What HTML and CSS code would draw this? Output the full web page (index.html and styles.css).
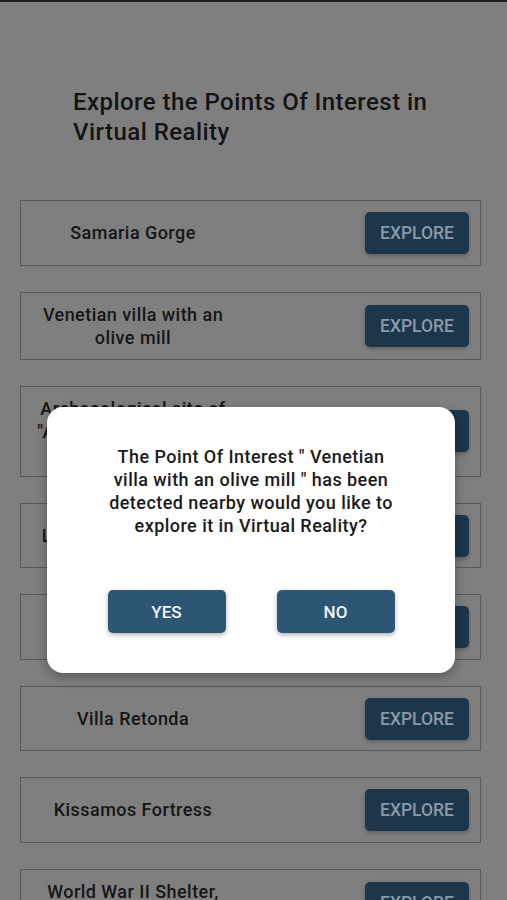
FILE: index.html
```html
<!DOCTYPE html>
<html lang="en">
<head>
<meta charset="utf-8">
<title>Explore the Points Of Interest</title>
<link rel="stylesheet" href="styles.css">
</head>
<body>
<div class="statusbar"></div>
<main class="page">
  <h1 class="title">Explore the Points Of Interest in Virtual Reality</h1>
  <ul class="list">
    <li class="card"><span class="name">Samaria Gorge</span><button class="explore">EXPLORE</button></li>
    <li class="card"><span class="name">Venetian villa with an olive mill</span><button class="explore">EXPLORE</button></li>
    <li class="card"><span class="name">Archaeological site of "Ancient Eleutherna" in Rethymno</span><button class="explore">EXPLORE</button></li>
    <li class="card"><span class="name">Lake Kournas, Chania</span><button class="explore">EXPLORE</button></li>
    <li class="card"><span class="name">Frangokastello</span><button class="explore">EXPLORE</button></li>
    <li class="card"><span class="name">Villa Retonda</span><button class="explore">EXPLORE</button></li>
    <li class="card"><span class="name">Kissamos Fortress</span><button class="explore">EXPLORE</button></li>
    <li class="card"><span class="name">World War II Shelter, Heraklion</span><button class="explore">EXPLORE</button></li>
  </ul>
</main>
<div class="dialog" role="dialog">
  <p class="dialog-text">The Point Of Interest " Venetian villa with an olive mill " has been detected nearby would you like to explore it in Virtual Reality?</p>
  <div class="dialog-actions">
    <button class="dbtn">YES</button>
    <button class="dbtn">NO</button>
  </div>
</div>
</body>
</html>
```

FILE: styles.css
```css
* { box-sizing: border-box; }
html, body {
  margin: 0;
  padding: 0;
  background: #7f7f7f;
  font-family: Roboto, "Noto Sans", "Liberation Sans", sans-serif;
  overflow: hidden;
}
.statusbar {
  height: 2px;
  background: #1c1c1c;
}
.page {
  padding: 85px 26px 0 20px;
}
.title {
  margin: 0 0 53px 53px;
  width: 400px;
  font-size: 24px;
  line-height: 30px;
  font-weight: 500;
  letter-spacing: 0.45px;
  color: #141414;
}
.list {
  list-style: none;
  margin: 0;
  padding: 0;
  display: flex;
  flex-direction: column;
  gap: 26px;
}
.card {
  display: flex;
  align-items: center;
  border: 1px solid #595959;
}
.name {
  width: 224px;
  padding: 10px 11px;
  text-align: center;
  font-size: 18px;
  line-height: 23px;
  font-weight: 500;
  letter-spacing: 0.45px;
  color: #161616;
}
.explore {
  margin: 11px 11px 10.5px auto;
  width: 104px;
  height: 42px;
  border: none;
  border-radius: 5px;
  background: #1c364b;
  color: #8a9aa8;
  font-family: inherit;
  font-size: 17.5px;
  font-weight: 500;
  box-shadow: 0 2px 4px rgba(0,0,0,0.25);
}
.dialog {
  position: absolute;
  left: 47px;
  top: 407px;
  width: 408px;
  height: 266px;
  background: #ffffff;
  border-radius: 16px;
  box-shadow: 0 4px 12px rgba(0,0,0,0.3);
  padding: 38px 54px 0;
  display: flex;
  flex-direction: column;
  align-items: center;
}
.dialog-text {
  margin: 0;
  text-align: center;
  font-size: 18px;
  line-height: 23px;
  font-weight: 500;
  letter-spacing: 0.45px;
  color: #1a1a1a;
}
.dialog-actions {
  margin-top: 53px;
  display: flex;
  gap: 51px;
}
.dbtn {
  width: 118px;
  height: 43px;
  border: none;
  border-radius: 5px;
  background: #2c5674;
  color: #f2f5f8;
  font-family: inherit;
  font-size: 17px;
  font-weight: 500;
  box-shadow: 0 2px 5px rgba(0,0,0,0.3);
}
```
